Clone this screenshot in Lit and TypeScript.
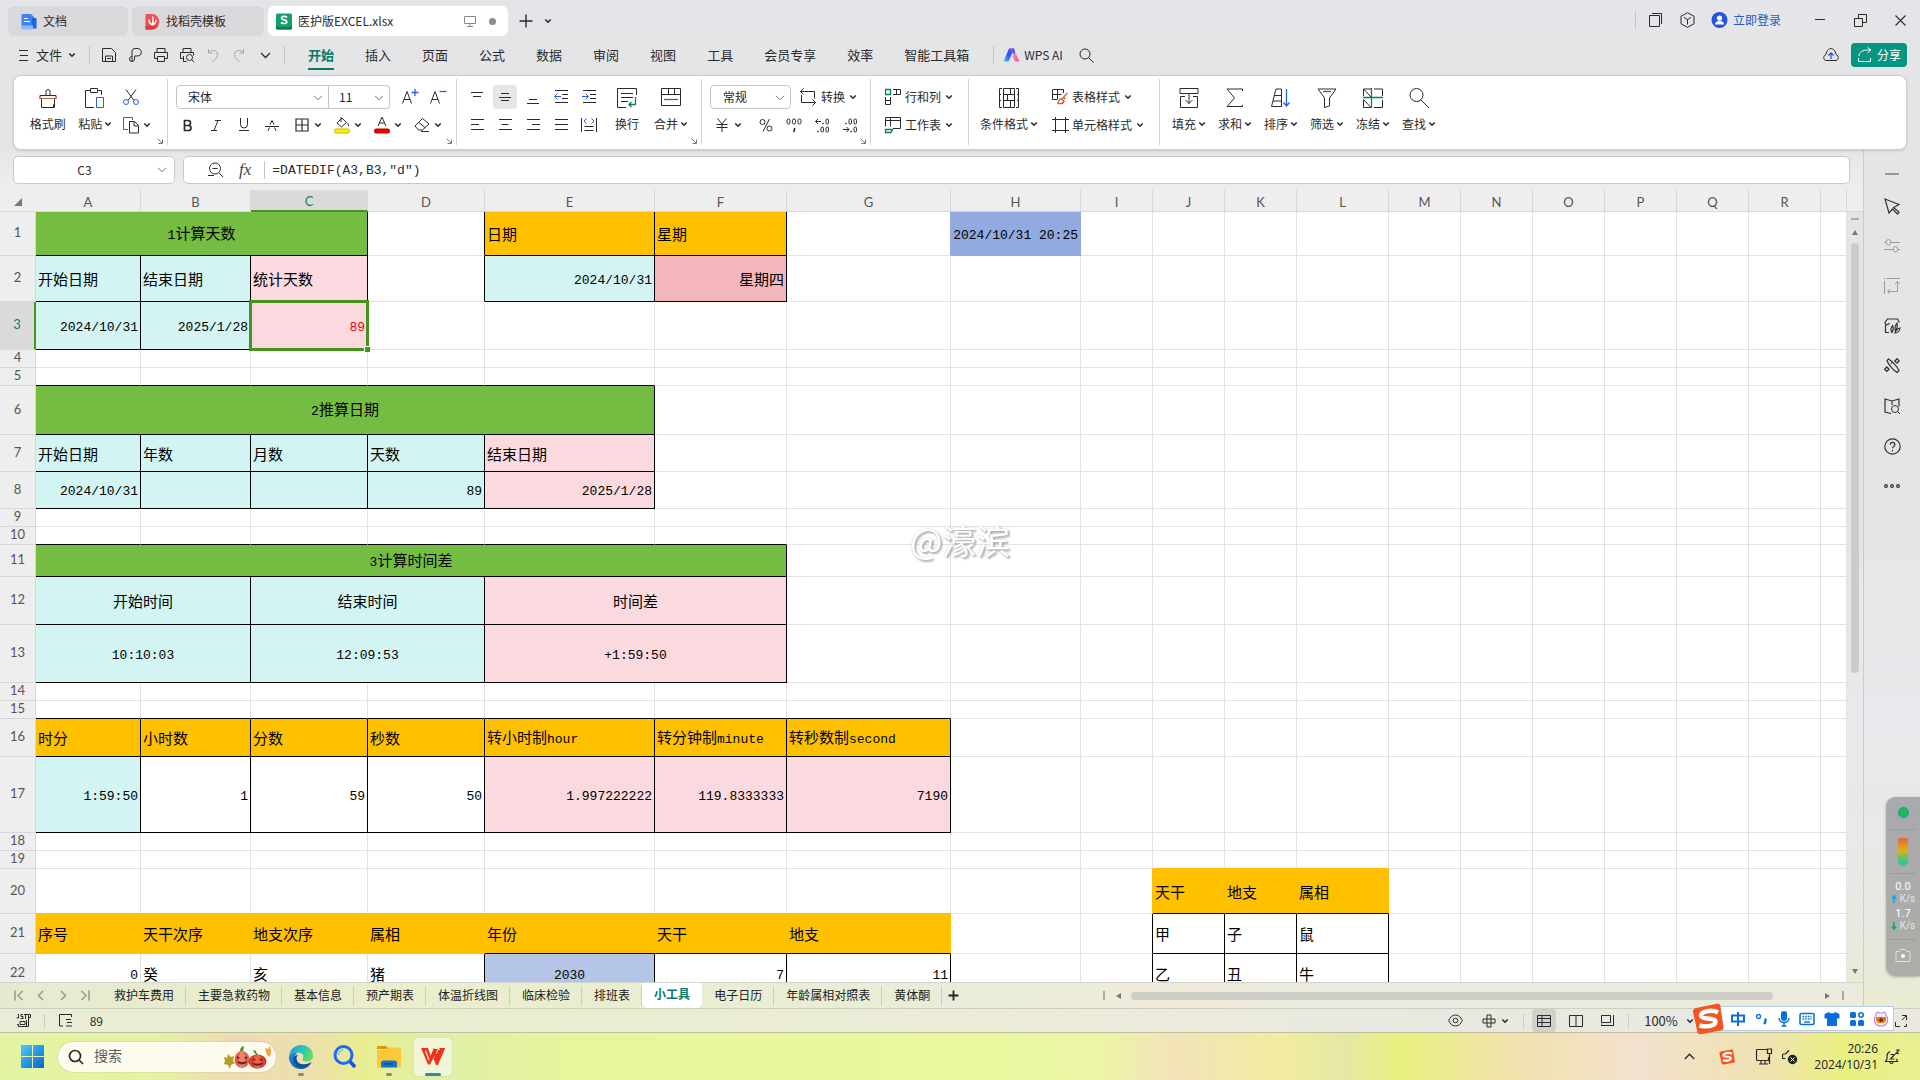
import { LitElement, html, css, svg, nothing, SVGTemplateResult } from "lit";
import { customElement } from "lit/decorators.js";
import { classMap } from "lit/directives/class-map.js";

const G = "#0a8060";
const B = "#2b5fe0";
const icon = (w: number, h: number, body: SVGTemplateResult) => html`<svg
  width=${w} height=${h} viewBox="0 0 ${w} ${h}" fill="none" stroke="currentColor" aria-hidden="true">${body}</svg>`;

const caret = icon(8, 6, svg`<path d="M1.3 1.5 4 4.2 6.7 1.5" stroke-width="1.6"/>`);
const chevron = icon(10, 6, svg`<path d="M1 .8 5 4.8 9 .8" stroke="#777"/>`);
const corner = icon(6, 6, svg`<path d="M.5.5 5 5M5.5 1.5v4h-4" stroke="#777"/>`);

const I = {
  menu: icon(12, 13, svg`<path d="M1 1.5h9M2 6.5h8M1 11.5h9"/>`),
  save: icon(16, 16, svg`<path d="M1.5 1.5h9l4 4v9h-13zM4.5 14v-5h7v5M6 11.5h4"/>`),
  link: icon(16, 16, svg`<path d="M5 14.5V4a3 3 0 0 1 3-2.5h2a4 3.5 0 0 1 0 7.5H7.5V12a2.5 2.5 0 0 1-5 0c0-1.5 1-2.5 2.5-2.5"/>`),
  print: icon(16, 16, svg`<path d="M4 5V1.5h8V5M4 11.5H1.5V5.5h13v6H12M4.5 9.5h7v5h-7z"/>`),
  preview: icon(16, 16, svg`<path d="M4 5V1.5h8V5M4 11.5H1.5V5.5h13v3M4.5 9v5.5h3"/><circle cx="10.5" cy="10.5" r="3"/><path d="m12.700 12.7 2.5 2.5"/>`),
  undo: icon(12, 16, svg`<path d="M1.5 2v4h4M1.5 6C4 2 10.5 3 10.5 7.5c0 3-2 5-5 7" stroke="#a4a4a8"/>`),
  redo: icon(12, 16, svg`<path d="M10.5 2v4h-4M10.5 6C8 2 1.5 3 1.5 7.5c0 3 2 5 5 7" stroke="#a4a4a8"/>`),
  more: icon(11, 7, svg`<path d="m1 1 4.5 4.5L10 1" stroke-width="1.3"/>`),
  search: icon(17, 17, svg`<circle cx="7" cy="7" r="5"/><path d="m10.7 10.7 5 5"/>`),
  ai: icon(17, 14, svg`<defs><linearGradient id="ai1" x1="0" y1="1" x2="1" y2="0"><stop stop-color="#39d0f5"/><stop offset=".5" stop-color="#2756f2"/><stop offset="1" stop-color="#5a4df0"/></linearGradient><linearGradient id="ai2" x1="0" y1="0" x2="1" y2="1"><stop stop-color="#e9a0f6"/><stop offset="1" stop-color="#ff4f8b"/></linearGradient></defs><path d="M6 .5h5L5.5 13.5h-5z" fill="url(#ai1)" stroke="none"/><path d="M8.500 .5H11l1 4-1 2-2-1zM10.500 6H13l3.500 7.500H12L9.500 8.500z" fill="url(#ai2)" stroke="none"/><path d="M8.500.5H11l1.500 5H10z" fill="#5a4df0" stroke="none"/>`),
  cloud: icon(18, 16, svg`<path d="M4 13.5c-3-.5-3-5 0-6C4.5 3.5 7 1.5 9 1.5s4.5 2 5 6c3 1 3 5.500 0 6z"/><path d="M9 12V6M6.5 8.5 9 6l2.5 2.5" stroke=${B} stroke-width="1.3"/>`),
  share: icon(16, 16, svg`<path d="M2 9c0-4 4-6 9-6h3M10.5.5 14 3l-3.5 3M1.5 11v3.500h12V11" stroke="#fff"/>`),
  brush: icon(20, 22, svg`<path d="M8 8V4.500a2 2 0 0 1 4 0V8M2 12V8.500h16V12"/><path d="M2 11.5h16" stroke="#d1652e"/><path d="M3.500 12v8.500h12v-3M16.500 12v8.500h-2"/>`),
  paste: icon(22, 22, svg`<path d="M6 3.500H1.500v17H10M6.500 1.500h7v4h-7zM14 3.500h3.500V8"/><path d="M12.500 10.500h7v10h-7z" stroke=${B}/>`),
  cut: icon(18, 18, svg`<path d="m4 1.500 8 11M14 1.500l-8 11"/><circle cx="4" cy="14" r="2.500" stroke=${B}/><circle cx="14" cy="14" r="2.500" stroke=${B}/>`),
  copy: icon(18, 18, svg`<path d="M6 13.500H1.500v-12h9V4" stroke=${B}/><path d="M7.500 5.500h5l4 4v7.500h-9zM12 5.500v4.500h4.500"/>`),
  aup: icon(18, 18, svg`<path d="M1.500 15.500 6 3.500l4.500 12M3 11.500h6"/><path d="M14 1v7M10.500 4.500h7" stroke=${B} stroke-width="1.300"/>`),
  adown: icon(18, 18, svg`<path d="M1.500 15.500 6 3.500l4.500 12M3 11.500h6"/><path d="M10.500 3.500h7" stroke=${B} stroke-width="1.300"/>`),
  bold: icon(12, 13, svg`<path d="M2.500 1.500H6a2.500 2.500 0 0 1 0 5H2.500zM2.500 6.500h4a2.500 2.500 0 0 1 0 5h-4z" stroke-width="1.700"/>`),
  italic: icon(12, 13, svg`<path d="M5 1.500h6M1 11.500h6M8 1.500l-4 10"/>`),
  underline: icon(12, 14, svg`<path d="M2.500 0v6.500a3.500 3.500 0 0 0 7 0V0M1 12.500h10"/>`),
  strike: icon(14, 13, svg`<path d="m3 12 1.500-3.500M11 12 9.500 8.500M5 5.500l2-4 2 4M0 7.500h14"/>`),
  borders: icon(14, 14, svg`<path d="M1 1h12v12H1zM7 1v12M1 7h12" stroke-width="1.200"/>`),
  fill: icon(16, 18, svg`<path d="M4.500 5.500 8 2l4.500 4.500-5 4.500L3 7zM7 1v5M13.500 7c1.500 2 1.500 3 .500 3.500"/><rect x=".5" y="13" width="15" height="4" rx="1.500" fill="#ffef00" stroke="#c9bc00"/>`),
  color: icon(16, 18, svg`<path d="M4 10 8 1l4 9M5.500 7h5"/><rect x=".5" y="13" width="15" height="4" rx="1.500" fill="#f00000" stroke="#b50000"/>`),
  eraser: icon(18, 16, svg`<path d="M2 9 9.500 1.500 16 7l-6.500 6H5.500zM6 5.500l6 5M8 14.500h8"/>`),
  vtop: icon(14, 14, svg`<path d="M1 2.500h12M3 6.500h8"/>`),
  vmid: icon(14, 14, svg`<path d="M3 3.500h8M1 7.500h12M3 10.500h8"/>`),
  vbot: icon(14, 14, svg`<path d="M3 9.500h8M1 13.500h12"/>`),
  outd: icon(14, 14, svg`<path d="M1 .5h13M8 4.500h6M8 8.500h6M1 12.500h13"/><path d="M7 6.500H1M3.500 3.500l-3 3 3 3" stroke=${B}/>`),
  ind: icon(14, 14, svg`<path d="M1 .5h13M8 4.500h6M8 8.500h6M1 12.500h13"/><path d="M0 6.500h6M3.500 3.500l3 3-3 3" stroke=${B}/>`),
  left: icon(14, 14, svg`<path d="M1 1.500h13M1 6.500h8M1 11.500h13"/>`),
  center: icon(14, 14, svg`<path d="M1 1.500h13M3.500 6.500h7M1 11.500h13"/>`),
  right: icon(14, 14, svg`<path d="M1 1.500h13M6 6.500h8M1 11.500h13"/>`),
  just: icon(14, 14, svg`<path d="M1 1.500h13M1 6.500h13M1 11.500h13"/>`),
  dist: icon(16, 16, svg`<path d="M.5 1v14M15.500 1v14M3.500 9.500h9M3.500 13.500h9"/><path d="m5.500 1.500-2.500 2.500 2.500 2.500M10.500 1.500 13 4l-2.500 2.500" stroke=${B}/>`),
  wrap: icon(22, 22, svg`<path d="M10 20.500H1.500v-19h19V8M5 6.500h12M5 10.500h12M5 14.500h7"/><path d="M19.500 10v7.500H13M15.500 15 13 17.500l2.500 2.500" stroke=${G} stroke-width="1.300"/>`),
  merge: icon(22, 22, svg`<path d="M1.500 1.500h19v17h-19zM1.500 7.500h19M8.500 1.500v6M14.500 1.500v6"/><path d="M4 12.500h14" stroke=${G} stroke-width="1.300"/>`),
  convert: icon(18, 18, svg`<path d="M3.500.5.5 3.500h14v7M1.500 7v7.500h14M3.500 6.500.5 3.500M12.500 11.500l3 3-3 3"/>`),
  yen: icon(14, 14, svg`<path d="M2.500.5 7 6l4.500-5.500M1.500 6.500h11M1.500 9.500h11M7 6v8"/>`),
  percent: icon(14, 14, svg`<circle cx="3.500" cy="4" r="2.500"/><circle cx="10.500" cy="10.500" r="2.500"/><path d="M10.500 1 4 13.500"/>`),
  thousand: icon(16, 16, svg`<rect x="1" y="2" width="3" height="5" rx="1.500"/><rect x="6.500" y="2" width="3" height="5" rx="1.500"/><rect x="12" y="2" width="3" height="5" rx="1.500"/><path d="M8.500 11v2l-1 2" stroke-width="1.600"/>`),
  incdec: icon(16, 16, svg`<path d="M7 4.500H1.500M4 2 1.500 4.500 4 7"/><circle cx="9" cy="6.500" r=".5"/><rect x="12" y="2" width="2.500" height="5" rx="1.200"/><circle cx="4" cy="14.500" r=".5"/><rect x="7" y="10" width="2.500" height="5" rx="1.200"/><rect x="12" y="10" width="2.500" height="5" rx="1.200"/>`),
  decdec: icon(16, 16, svg`<circle cx="4" cy="6.500" r=".5"/><rect x="7" y="2" width="2.500" height="5" rx="1.200"/><rect x="12" y="2" width="2.500" height="5" rx="1.200"/><path d="M1 12.500h6M4.500 10 7 12.500 4.500 15"/><circle cx="9" cy="14.500" r=".5"/><rect x="12" y="10" width="2.500" height="5" rx="1.200"/>`),
  rowcol: icon(16, 18, svg`<path d="M.5 1.500h5v5h-5z" stroke=${G} stroke-width="1.400"/><path d="M8 1.500h7.500v5H8M11.500 1.500v5M.5 9v7.500h5V9M.5 12.500h5"/>`),
  sheet: icon(18, 18, svg`<path d="M9 12.500h7.500v-11h-15v9M1.500 4.500h15M6.500 1.500v9"/><path d="M1.500 13.500h7l-1.500 3h-5.500z" stroke=${G} stroke-width="1.300"/>`),
  cond: icon(22, 22, svg`<path d="M4 1.500H1.500v19H4M18 1.500h2.500v19H18M5.500 1.500h11v19h-11zM5.500 7.500h11M5.500 13.500h11M12.500 1.500v6M9.500 7.500v6M12.500 13.500v7M1.500 7.500H3M1.500 13.500H3M19 7.500h1.500M19 13.500h1.500"/>`),
  tstyle: icon(18, 18, svg`<path d="M6 11.500H1.500v-10h11V5M1.500 6.500h9M6.500 1.500v10"/><path d="m16.500 5-6 6.500M12 9l2.500 2M10 11c-2 0-2.500 1.500-3 4.500 3 .500 5.500 0 6-2.500z" stroke="#d1652e" stroke-width="1.300"/>`),
  cstyle: icon(18, 18, svg`<path d="M4.500 1v16M14.500 1v16M1 3.500h17M1 14.500h17"/>`),
  fillc: icon(22, 22, svg`<path d="M2 1.500h18v5H2zM7 9.500H2.500v11h17v-11H15M11 6.500v10M7.500 13l3.500 3.500 3.500-3.500"/>`),
  sum: icon(22, 22, svg`<path d="M18.500 4V2H3l7.500 9L3 19.500h15.500V18"/>`),
  sort: icon(22, 22, svg`<path d="M1.500 19.500 6 2h5.500v17.500zM4.500 8.500h7M3 14h8.500"/><path d="M16.500 2v17M13.500 15.500l3 3.500 3-3.500" stroke=${B} stroke-width="1.300"/>`),
  filter: icon(22, 22, svg`<path d="M2 2h18l-6.500 9v8l-5 1.500V11z"/><path d="M7 4.500h8" stroke=${G} stroke-width="1.300"/>`),
  freeze: icon(22, 22, svg`<path d="M1.500 9V2H9M12 2h8.500v7M20.500 13v7.500H12M1.500 13v7.500H9M1.500 2 9 10M1.500 12.500 9 20.500"/><path d="M9.500 1v20M1 10.500h20" stroke=${G} stroke-width="1.300"/>`),
  find: icon(22, 22, svg`<circle cx="8.500" cy="8" r="6.500"/><path d="m13 13 8 8"/>`),
  zoomout: icon(18, 18, svg`<circle cx="9" cy="7.500" r="5.500"/><path d="M6.500 7.500h5M13 12l4 4M2 14.500h6"/>`),
};

type Cell = { t?: string; f?: string; a?: string; s?: number; r?: string; b?: string; red?: boolean; sel?: boolean };
const LETTERS = "ABCDEFGHIJKLMNOPQR".split("").concat("");
const WIDTHS = [105, 110, 117, 117, 170, 132, 164, 130, 72, 72, 72, 92, 72, 72, 72, 72, 72, 72, 0];
const HEIGHTS = [44, 46, 48, 18, 18, 49, 37, 37, 18, 18, 32, 48, 58, 18, 18, 38, 76, 18, 18, 45, 40, 40];

const box = (t: string, f: string, a = "l", s = 1): Cell => ({ t, f, a, s, r: "k", b: "k" });
const under = (cols: string, b = "k"): Record<string, Cell> => Object.fromEntries(cols.split("").map((c) => [c, { b }]));
const flat = (t: string, b = "o"): Cell => ({ t, f: "orange", r: "o", b });

const ROWS: Record<number, Record<string, Cell>> = {
  1: { A: box("1计算天数", "green", "c", 3), D: { r: "k" }, E: box("日期", "orange"), F: box("星期", "orange"), G: { r: "u" }, H: { t: "2024/10/31 20:25", f: "blue", a: "r", r: "u", b: "u" } },
  2: { A: box("开始日期", "cyan"), B: box("结束日期", "cyan"), C: box("统计天数", "pink"), D: { r: "k" }, E: box("2024/10/31", "cyan", "r"), F: box("星期四", "rose", "r") },
  3: { A: box("2024/10/31", "cyan", "r"), B: box("2025/1/28", "cyan", "r"), C: { ...box("89", "pink", "r"), red: true, sel: true } },
  5: under("ABCDE"),
  6: { A: box("2推算日期", "green", "c", 5) },
  7: { A: box("开始日期", "cyan"), B: box("年数", "cyan"), C: box("月数", "cyan"), D: box("天数", "cyan"), E: box("结束日期", "pink") },
  8: { A: box("2024/10/31", "cyan", "r"), B: box("", "cyan"), C: box("", "cyan"), D: box("89", "cyan", "r"), E: box("2025/1/28", "pink", "r") },
  10: under("ABCDEF"),
  11: { A: box("3计算时间差", "green", "c", 6) },
  12: { A: box("开始时间", "cyan", "c", 2), C: box("结束时间", "cyan", "c", 2), E: box("时间差", "pink", "c", 2) },
  13: { A: box("10:10:03", "cyan", "c", 2), C: box("12:09:53", "cyan", "c", 2), E: box("+1:59:50", "pink", "c", 2) },
  15: under("ABCDEFG"),
  16: { A: box("时分", "orange"), B: box("小时数", "orange"), C: box("分数", "orange"), D: box("秒数", "orange"), E: box("转小时制hour", "orange"), F: box("转分钟制minute", "orange"), G: box("转秒数制second", "orange") },
  17: { A: box("1:59:50", "cyan", "r"), B: box("1", "", "r"), C: box("59", "", "r"), D: box("50", "", "r"), E: box("1.997222222", "pink", "r"), F: box("119.8333333", "pink", "r"), G: box("7190", "pink", "r") },
  19: { ...under("JKL", "o") },
  20: { ...under("ABCDEFG", "o"), I: { r: "o" }, J: flat("天干", "k"), K: flat("地支", "k"), L: flat("属相", "k") },
  21: { A: flat("序号"), B: flat("天干次序"), C: flat("地支次序"), D: flat("属相"), E: flat("年份", "k"), F: flat("天干", "k"), G: flat("地支", "k"), I: { r: "k" }, J: box("甲", ""), K: box("子", ""), L: box("鼠", "") },
  22: { A: { t: "0", a: "r" }, B: { t: "癸" }, C: { t: "亥" }, D: { t: "猪", r: "k" }, E: box("2030", "peri", "c"), F: box("7", "", "r"), G: box("11", "", "r"), I: { r: "k" }, J: box("乙", ""), K: box("丑", ""), L: box("牛", "") },
};

@customElement("sheet-grid")
export class SheetGrid extends LitElement {
  static styles = css`
    :host { display: block; flex: 1; min-width: 0; overflow: hidden; background: #fff; }
    table { width: 100%; table-layout: fixed; border-collapse: separate; border-spacing: 0; }
    .rowhead { width: 36px; }
    th { box-sizing: border-box; padding: 0; background: #eeeeee; color: #555; font: 400 13px/15px Lato, "Open Sans", sans-serif; border: 0 solid #d8d8d8; border-width: 0 1px 1px 0; }
    thead th { height: 22px; line-height: 18px; padding-top: 2px; }
    tbody th { padding-bottom: 2px; }
    .corner { border-right-color: #eee; }
    .corner svg { display: block; margin: 0 13px 0 auto; }
    th.on { background: #dadada; color: #0c7f63; }
    thead th.on { border-bottom: 2px solid #43931d; }
    tbody th.on { border-right: 2px solid #43931d; }
    td { position: relative; box-sizing: border-box; padding: 1px 2px 0; border: 0 solid #e2e2e2; border-width: 0 1px 1px 0; white-space: nowrap; color: #000; font: 400 15px/16px "Noto Sans CJK SC", sans-serif; }
    td.h { padding: 0; }
    .lat { font: 13px/16px "Liberation Mono", monospace; }
    .c { text-align: center; }
    .r { text-align: right; }
    .red { color: #f00; }
    .green { background: #75bd42; } .orange { background: #ffc000; } .cyan { background: #d2f4f2; }
    .pink { background: #fadade; } .rose { background: #f4b6bd; } .blue { background: #91aae0; } .peri { background: #b4c5e8; }
    .rk { border-right-color: #000; } .bk { border-bottom-color: #000; }
    .ro { border-right-color: #ffc000; } .bo { border-bottom-color: #ffc000; }
    .ru { border-right-color: #91aae0; } .bu { border-bottom-color: #91aae0; }
    .frame { position: absolute; inset: -2px; z-index: 1; border: 3px solid #43931d; }
    .frame::after { content: ""; position: absolute; right: -4px; bottom: -4px; width: 5px; height: 5px; background: #43931d; border: 1px solid #fff; border-width: 1px 0 0 1px; }
  `;

  private text(t = "") {
    return t.split(/([\x20-\x7e]+)/).filter(Boolean).map((p) => (/[\x20-\x7e]/.test(p) ? html`<span class="lat">${p}</span>` : p));
  }

  private cells(row: number) {
    const spec = ROWS[row] ?? {};
    const out = [];
    for (let i = 0; i < LETTERS.length; ) {
      const c: Cell = spec[LETTERS[i]] ?? {};
      const cls = { h: !c.t, [c.f || "plain"]: true, [c.a || "l"]: true, ["r" + (c.r || "g")]: true, ["b" + (c.b || "g")]: true, red: !!c.red };
      out.push(html`<td class=${classMap(cls)} colspan=${c.s ?? 1}>${this.text(c.t)}${c.sel ? html`<div class="frame"></div>` : nothing}</td>`);
      i += c.s ?? 1;
    }
    return out;
  }

  render() {
    return html`<table>
      <colgroup><col class="rowhead" />${WIDTHS.map((w) => html`<col style=${w ? `width:${w}px` : ""} />`)}</colgroup>
      <thead><tr>
        <th class="corner">${icon(8, 8, svg`<path d="M8 0v8H0z" fill="#777" stroke="none"/>`)}</th>
        ${LETTERS.map((l) => html`<th class=${l === "C" ? "on" : ""} scope="col">${l}</th>`)}
      </tr></thead>
      <tbody>${HEIGHTS.map((h, i) => html`<tr style="height:${h}px">
        <th class=${i === 2 ? "on" : ""} scope="row">${i + 1}</th>${this.cells(i + 1)}</tr>`)}</tbody>
    </table>`;
  }
}

const SOGOU = (s: number) => html`<svg width=${s} height=${s} viewBox="0 0 32 32" aria-hidden="true"><path d="M4 5 25 .8c2-.3 3 .5 3.300 2L31.500 24c.3 2-.5 3-2 3.300L9 31.200c-2 .3-3-.5-3.500-2L1 9C.6 7 2 5.500 4 5z" fill="#f4541f"/><path d="M26 9.500C20 6 8 8.500 9 13c1 4 14.500 1 14.500 5.500 0 4.500-8 6-16 4" fill="none" stroke="#fff" stroke-width="4.400"/></svg>`;

const MENUS = ["开始", "插入", "页面", "公式", "数据", "审阅", "视图", "工具", "会员专享", "效率", "智能工具箱"];
const SHEETS = ["救护车费用", "主要急救药物", "基本信息", "预产期表", "体温折线图", "临床检验", "排班表", "小工具", "电子日历", "年龄属相对照表", "黄体酮"];

@customElement("app-root")
export class AppRoot extends LitElement {
  static styles = css`
    :host { position: relative; display: flex; flex-direction: column; height: 100vh; overflow: hidden; color: #2b2b2b;
      font: 12px/16px "Noto Sans CJK SC", sans-serif; background: linear-gradient(180deg, #e4e5e8 0, #e5e4e5 45%, #e9e8ec 68%, #e8e9e2 86%, #e9ecd2 93%, #e9ecd6 100%); }
    * { box-sizing: border-box; }
    svg { display: block; flex: none; }
    button, select, input { font: inherit; color: inherit; background: none; border: 0; padding: 0; margin: 0; outline: 0; }
    button { display: flex; align-items: center; justify-content: center; white-space: nowrap; }
    a { color: inherit; text-decoration: none; }
    .grow { flex: 1; }
    .sep { width: 1px; height: 18px; background: #c4c4c6; flex: none; }

    .title { display: flex; padding: 6px 0 2px 8px; gap: 4px; height: 38px; }
    .doc { display: flex; align-items: center; justify-content: flex-start; height: 30px; width: 120px; padding: 0 13px; gap: 6px; border-radius: 6px; background: #d9d8da; }
    .doc.b { width: 132px; }
    .doc.c { width: 240px; background: #fff; padding: 0 8px; }
    .doc .grow { text-align: left; }
    .doc.c .dot { width: 7px; height: 7px; border-radius: 50%; background: #8c8c8c; margin: 0 4px 0 7px; }
    .plus { width: 28px; }
    .win { display: flex; align-items: center; height: 28px; }
    .win button { width: 40px; height: 28px; }
    .win .slim { width: 32px; }
    .login { display: flex; align-items: center; gap: 5px; color: #1c5ec8; margin: 0 19px 0 7px; }

    .menubar { display: flex; align-items: center; height: 37px; padding: 0 13px 3px 18px; }
    .menubar .file { gap: 6px; font-size: 13px; margin-right: 13px; }
    .tool { width: 26px; height: 26px; }
    .tabs { display: flex; gap: 31px; margin: 0 24px 0 23px; }
    .tabs button { position: relative; height: 32px; font-size: 13px; }
    .tabs .on { color: #067a68; font-weight: 700; }
    .tabs .on::after { content: ""; position: absolute; left: 0; right: 0; bottom: 1px; height: 2px; background: #067a68; }
    .ai { gap: 4px; margin: 0 15px 0 9px; }
    .share { height: 24px; width: 56px; border-radius: 4px; background: #06957f; color: #fff; gap: 4px; margin-left: 11px; }

    .ribbon { display: flex; align-items: flex-start; height: 75px; margin: 0 13px; padding-top: 3px; background: #fff; border: 1px solid #cfcfd1; border-radius: 8px; box-shadow: 0 1px 3px #0002; position: relative; z-index: 1; flex: none; }
    .group { display: flex; position: relative; height: 66px; padding: 6px 6px 0; border-right: 1px solid #d4d4d6; }
    .group.last { border: 0; }
    .g1 { width: 154px; padding-left: 10px; } .g2 { width: 289px; } .g3 { width: 245px; } .g4 { width: 169px; padding-left: 8px; }
    .g5 { width: 98px; padding-left: 12px; } .g6 { width: 191px; padding-left: 9px; }
    .launch { position: absolute; right: 4px; bottom: 1px; }
    .big { flex-direction: column; justify-content: flex-start; gap: 6px; padding-top: 1px; height: 50px; width: 46px; }
    .big.w48 { width: 48px; } .big.w40 { width: 40px; } .big.w62 { width: 62px; }
    .big i { display: flex; align-items: center; justify-content: center; height: 24px; }
    .big span { display: flex; align-items: center; gap: 2px; }
    .stack { display: flex; flex-direction: column; gap: 4px; }
    .line { display: flex; height: 24px; align-items: center; }
    .sm { width: 28px; height: 24px; border-radius: 4px; }
    .sm.on { background: #e6e6e6; width: 24px; margin: 0 2px; }
    .dd { width: 40px; height: 24px; justify-content: flex-start; }
    .dd i { display: flex; justify-content: center; width: 20px; margin-right: 2px; }
    .wide { height: 24px; justify-content: flex-start; gap: 2px; }
    .wide i { display: flex; justify-content: center; width: 20px; }
    .wide span { display: flex; align-items: center; gap: 4px; }
    .pick { position: relative; display: flex; height: 24px; border: 1px solid #c6c6c8; border-radius: 4px; background: #fff; color: #1c1f33; }
    .pick select { appearance: none; width: 79px; padding: 0 12px; }
    .pick svg { position: absolute; right: 5px; top: 9px; pointer-events: none; }
    .pick.font { border-radius: 4px 0 0 4px; } .pick.font select { width: 151px; padding: 0 11px; }
    .pick.size { border-left: 0; border-radius: 0 4px 4px 0; margin-right: 6px; } .pick.size select { width: 60px; padding: 0 10px; }
    .in2 { margin-left: 2px; } .in4 { margin-left: 4px; } .in6 { margin-left: 6px; } .in8 { margin-left: 8px; } .in10 { margin-left: 10px; } .in12 { margin-left: 12px; } .in14 { margin-left: 14px; }

    .body { display: flex; flex: 1; min-height: 0; }
    .main { display: flex; flex-direction: column; flex: 1; min-width: 0; }
    .fbar { display: flex; gap: 8px; padding: 6px 13px; background: linear-gradient(#e6e6e7, #eee); }
    .name, .formula { display: flex; align-items: center; height: 28px; background: #fff; border: 1px solid #c9c9cb; border-radius: 5px; }
    .name { width: 162px; padding-right: 7px; }
    .name input { flex: 1; min-width: 0; text-align: center; padding-right: 2px; }
    .formula { flex: 1; padding-left: 22px; }
    .formula input { flex: 1; font: 13px "Liberation Mono", monospace; margin-left: 7px; }
    .fx { font: italic 17px "Liberation Serif", serif; margin: 0 13px 0 15px; color: #444; }
    .sheet { display: flex; flex: 1; min-height: 0; background: linear-gradient(#eeeeee 22px, #0000 22px); }
    .vbar { display: flex; flex-direction: column; align-items: center; width: 16px; margin-top: 21px; border-top: 1px solid #d8d8d8; padding: 6px 0 8px; gap: 10px; }
    .vbar .tick { width: 8px; height: 2px; background: #b0b0b0; }
    .vtrack { flex: 1; width: 8px; margin-top: -2px; }
    .vthumb { height: 60%; border-radius: 4px; background: #cbcbcc; }
    .up, .down { width: 0; height: 0; border: 3px solid #0000; border-top: 0; border-bottom: 5px solid #777; }
    .down { border-bottom: 0; border-top: 5px solid #777; }

    .sheets { display: flex; align-items: center; height: 26px; border-top: 1px solid #d3d4cd; background: linear-gradient(90deg, #e6ead0, #eaeecb 20%, #e9edd8 50%, #efebdb 62%, #eaeae0 75%, #eaebdc); }
    .nav { width: 22px; height: 22px; color: #9b9d90; }
    .nav.first { margin-left: 8px; }
    .nav.end { margin-right: 6px; }
    .st { height: 20px; padding: 0 11px 2px 12px; border-right: 1px solid #cdd0b8; color: #222; }
    .st.on { height: 25px; padding: 0 12px 3px; background: #fff; border: 0; border-radius: 0 0 6px 6px; color: #06796a; font-weight: 700; align-self: flex-start; }
    .hbar { display: flex; align-items: center; width: 741px; gap: 11px; margin-right: 19px; }
    .htrack { flex: 1; margin-left: -2px; }
    .hthumb { width: 94%; height: 8px; border-radius: 4px; background: #cdcec6; }
    .tickv { width: 2px; height: 9px; background: #aaaba2; }
    .add { width: 22px; }

    .side { display: flex; flex-direction: column; align-items: center; width: 57px; border-left: 1px solid #cbcbcc; padding-top: 12px; }
    .side button { height: 40px; width: 40px; color: #333; }
    .side .off { color: #9c9c9e; }
    .side .dash { height: 24px; }
    .side .dash i { width: 14px; height: 2px; background: #999; }

    .status { display: flex; align-items: center; height: 24px; border-top: 1px solid #cbcdbd; background: linear-gradient(90deg, #e9edd6, #eaedcf 30%, #edebdb 58%, #e8e8e2 75%, #ebe8e0); padding-left: 16px; flex: none; }
    .status .sep { height: 14px; background: #cbcdbd; }
    .vw { width: 32px; height: 23px; }
    .vw.on i { display: flex; justify-content: center; align-items: center; width: 24px; height: 23px; border-radius: 4px; background: #d2d1c9; }
    .zoomv { width: 64px; gap: 8px; font-size: 13px; padding-left: 16px; }
    .full { margin: 0 13px 0 202px; }

    .task { display: flex; align-items: center; height: 48px; flex: none; border-top: 1px solid #bcbf9c; padding-left: 21px;
      background: linear-gradient(90deg, #e3f4a4 0, #e6f2a4 8%, #efdcb2 12%, #ecdfae 16%, #e9ee90 19%, #dfefa8 23%, #e8f59c 30%, #e9f79f 52%, #ecf5a6 57%, #f3e4b9 61%, #f2eca0 67%, #e4e8a6 70%, #e9f07f 73%, #efe3a8 78%, #f3e1cf 85%, #efe2b0 92%, #e9f080 96%, #e8ef92 100%); }
    .searchbox { display: flex; align-items: center; width: 218px; height: 30px; margin: 0 6px 0 14px; padding: 0 3px 0 10px; gap: 10px; border-radius: 15px; background: #fdfaee; box-shadow: 0 0 2px #0003; }
    .searchbox input { flex: 1; min-width: 0; font-size: 14px; padding-bottom: 3px; }
    .searchbox input::placeholder { color: #5c5c5c; opacity: 1; }
    .app { position: relative; width: 38px; height: 38px; margin-right: 6px; border-radius: 4px; }
    .app.on { background: #f0f6d6; box-shadow: 0 0 1px #0004; }
    .app.run::after, .app.on::after { content: ""; position: absolute; bottom: 0; left: 50%; width: 6px; height: 3px; margin-left: -3px; border-radius: 2px; background: #8a8a66; }
    .app.on::after { width: 16px; margin-left: -8px; background: #2a8fa0; }
    .clock { text-align: right; font: 12px/16px "Open Sans", sans-serif; color: #222; margin: 0 6px 0 16px; }
    .tray { display: flex; align-items: center; padding-right: 20px; }
    .tray button { height: 32px; }
    .tray .t24 { margin-right: 24px; } .tray .t20 { margin-left: 20px; margin-right: 9px; }

    .ime { position: absolute; right: 26px; bottom: 49px; display: flex; align-items: center; height: 25px; width: 202px; color: #0a6fdc; }
    .ime .bg { display: flex; align-items: center; justify-content: space-between; flex: 1; height: 25px; margin-left: -10px; padding: 0 4px 0 15px; background: #fff; border: 1px solid #b9cbe0; }
    .ime > svg { position: relative; z-index: 1; }
    .float { position: absolute; right: 0; bottom: 104px; width: 34px; height: 179px; display: flex; flex-direction: column; align-items: center; border-radius: 9px 0 0 9px; background: linear-gradient(#a9a9ae, #adaea7); color: #fff; font: 11px/13px Roboto, sans-serif; padding-top: 10px; box-shadow: 0 1px 3px #0004; }
    .float .led { width: 11px; height: 11px; border-radius: 50%; background: #0bbf63; border: 1px solid #348fa0; }
    .float hr { width: 26px; height: 1px; border: 0; margin: 11px 0 8px; background: #9c9ca0; flex: none; }
    .float .temp { width: 10px; height: 28px; border-radius: 2px 2px 5px 5px; background: linear-gradient(#e8642f, #e0b020 45%, #4fc86a 75%, #38b8c8); }
    .float hr.n { margin: 7px 0 6px; }
    .rate { display: flex; flex-direction: column; align-items: center; padding-bottom: 2px; }
    .rate small { display: flex; gap: 3px; font-size: 10px; line-height: 12px; color: #e4e4e4; }
    .float hr.m { margin: 5px 0 8px; }
    .mark { position: absolute; left: 50%; top: 50%; transform: translate(-50%, -50%); font: 34px/40px "Noto Sans CJK SC", sans-serif; color: #fff; text-shadow: 2px 2px 2px #aaa, 0 0 2px #ccc; pointer-events: none; }
  `;

  private big(ic: unknown, label: string, dd = true, w = "") {
    return html`<button class="big ${w}"><i>${ic}</i><span>${label}${dd ? caret : nothing}</span></button>`;
  }
  private sm(ic: unknown, label: string, cls = "") {
    return html`<button class="sm ${cls}" aria-label=${label}>${ic}</button>`;
  }
  private dd(ic: unknown, label: string, cls = "") {
    return html`<button class="dd ${cls}" aria-label=${label}><i>${ic}</i>${caret}</button>`;
  }
  private wide(ic: unknown, label: string, cls = "") {
    return html`<button class="wide ${cls}"><i>${ic}</i><span>${label}${caret}</span></button>`;
  }
  private launch(label: string) {
    return html`<button class="launch" aria-label=${label}>${corner}</button>`;
  }

  private title() {
    return html`<header class="title">
      <button class="doc">${icon(16, 17, svg`<path d="M1.500 1H10l3 3v11H1.500a1 1 0 0 1-1-1V2a1 1 0 0 1 1-1z" fill="#3f82f8" stroke="none"/><path d="M11 5h3.500a1 1 0 0 1 1 1v9.500h-5z" fill="#1e62e0" stroke="none"/><path d="M.5 12.500h11.500v4h-11a.5.5 0 0 1-.5-.5z" fill="#8fb8fb" stroke="none"/><path d="M3 5.500h4M3 8.500h6" stroke="#fff"/>`)}<span>文档</span></button>
      <button class="doc b">${icon(15, 17, svg`<path d="M.5 1H7a7 7.500 0 0 1 0 15.500H.5z" fill="#f05050" stroke="none"/><path d="M.5 13h12.300a7 6 0 0 1-5.800 3.500H.5z" fill="#d83c3c" stroke="none"/><path d="M7.500 3.500c1 2.500 1 5 0 8.500M4 6.500c0 3 1 4.500 3.500 5.500M11 6.500c0 3-1 4.500-3.500 5.500" stroke="#fff" stroke-width="1.500"/>`)}<span>找稻壳模板</span></button>
      <button class="doc c">${icon(16, 17, svg`<rect y=".5" width="16" height="16" rx="1.500" fill="#12a06a" stroke="none"/><path d="M0 14h16v1a1.500 1.500 0 0 1-1.500 1.500h-13A1.500 1.500 0 0 1 0 15z" fill="#0a7a50" stroke="none"/><path d="M11 4.500C9 2.800 5.300 3.300 5.500 5.300s5.300 1.200 5.300 3.400-4 2.300-5.800.8" stroke="#fff" stroke-width="1.700"/>`)}<span class="grow">医护版EXCEL.xlsx</span>${icon(12, 12, svg`<path d="M.5 1.500h11v7H.5zM6 8.500V11M3 11.500h6" stroke="#888"/>`)}<i class="dot"></i></button>
      <button class="plus" aria-label="新建">${icon(14, 14, svg`<path d="M7 .5v13M.5 7h13" stroke-width="1.400"/>`)}</button><button aria-label="新建选项">${caret}</button>
      <span class="grow"></span>
      <div class="win"><span class="sep"></span><span class="in4"></span>
        <button class="slim" aria-label="窗口">${icon(14, 14, svg`<path d="M.5 2.500h10v11H.5zM3 .5h9.500V11"/>`)}</button>
        <button class="slim" aria-label="应用">${icon(15, 16, svg`<path d="m7.500.7 6.500 3.500v7.600l-6.500 3.500L1 11.800V4.200zM4 5.500l3.500 2 3.500-2M7.500 7.500v5"/>`)}</button>
        <a class="login" href="#login">${icon(17, 16, svg`<circle cx="8.500" cy="8" r="8" fill="#2456dd" stroke="none"/><circle cx="8.500" cy="6" r="2.600" fill="#fff" stroke="none"/><path d="M4 12.500c0-5 9-5 9 0z" fill="#fff" stroke="none"/>`)}立即登录</a>
        <button aria-label="最小化">${icon(10, 10, svg`<path d="M0 4.500h10"/>`)}</button>
        <button aria-label="还原">${icon(13, 13, svg`<path d="M.5 4.500h8v8h-8zM4.500 4V.5h8v8H9"/>`)}</button>
        <button aria-label="关闭">${icon(11, 11, svg`<path d="m.5.5 10 10M10.500.5l-10 10" stroke-width="1.100"/>`)}</button>
      </div></header>`;
  }

  private menubar() {
    const tools: [string, unknown][] = [["保存", I.save], ["输出", I.link], ["打印", I.print], ["打印预览", I.preview], ["撤销", I.undo], ["恢复", I.redo], ["更多", I.more]];
    return html`<nav class="menubar">
      <button class="file">${I.menu}<span>文件</span>${caret}</button><span class="sep"></span><span class="in6"></span>
      ${tools.map(([l, i]) => html`<button class="tool" aria-label=${l}>${i}</button>`)}
      <span class="in6"></span><span class="sep"></span>
      <div class="tabs">${MENUS.map((m, i) => html`<button class=${i ? "" : "on"}>${m}</button>`)}</div>
      <span class="sep"></span><button class="ai">${I.ai}<span>WPS AI</span></button><button aria-label="搜索">${I.search}</button>
      <span class="grow"></span><button aria-label="云同步">${I.cloud}</button><button class="share">${I.share}<span>分享</span></button>
    </nav>`;
  }

  private ribbon() {
    return html`<section class="ribbon">
      <div class="group g1">${this.big(I.brush, "格式刷", false, "w48")}${this.big(I.paste, "粘贴", true, "w48")}
        <div class="stack in2"><button class="dd" aria-label="剪切"><i>${I.cut}</i></button>${this.dd(I.copy, "复制")}</div>${this.launch("剪贴板")}</div>
      <div class="group g2"><div class="stack">
        <div class="line in2"><label class="pick font"><select aria-label="字体"><option>宋体</option></select>${chevron}</label>
          <label class="pick size"><select aria-label="字号"><option>11</option></select>${chevron}</label>${this.sm(I.aup, "增大字号")}${this.sm(I.adown, "减小字号")}</div>
        <div class="line">${this.sm(I.bold, "加粗")}${this.sm(I.italic, "倾斜")}${this.sm(I.underline, "下划线")}${this.sm(I.strike, "删除线")}
          ${this.dd(I.borders, "边框", "in6")}${this.dd(I.fill, "填充颜色")}${this.dd(I.color, "字体颜色")}${this.dd(I.eraser, "清除")}</div></div>${this.launch("字体设置")}</div>
      <div class="group g3"><div class="stack">
        <div class="line">${this.sm(I.vtop, "顶端对齐")}${this.sm(I.vmid, "垂直居中", "on")}${this.sm(I.vbot, "底端对齐")}${this.sm(I.outd, "减少缩进")}${this.sm(I.ind, "增加缩进")}</div>
        <div class="line">${this.sm(I.left, "左对齐")}${this.sm(I.center, "居中")}${this.sm(I.right, "右对齐")}${this.sm(I.just, "两端对齐")}${this.sm(I.dist, "分散对齐")}</div></div>
        ${this.big(I.wrap, "换行", false, "w48")}${this.big(I.merge, "合并", true, "w40")}${this.launch("对齐设置")}</div>
      <div class="group g4"><div class="stack">
        <div class="line"><label class="pick"><select aria-label="数字格式"><option>常规</option></select>${chevron}</label>${this.wide(I.convert, "转换", "in8")}</div>
        <div class="line">${this.dd(I.yen, "货币", "in2")}${this.sm(I.percent, "百分比")}${this.sm(I.thousand, "千位分隔")}${this.sm(I.incdec, "增加小数位")}${this.sm(I.decdec, "减少小数位")}</div></div>${this.launch("数字设置")}</div>
      <div class="group g5"><div class="stack">${this.wide(I.rowcol, "行和列")}${this.wide(I.sheet, "工作表")}</div></div>
      <div class="group g6">${this.big(I.cond, "条件格式", true, "w62")}<div class="stack in10">${this.wide(I.tstyle, "表格样式")}${this.wide(I.cstyle, "单元格样式")}</div></div>
      <div class="group last">${this.big(I.fillc, "填充")}${this.big(I.sum, "求和")}${this.big(I.sort, "排序")}${this.big(I.filter, "筛选")}${this.big(I.freeze, "冻结")}${this.big(I.find, "查找")}</div>
    </section>`;
  }

  private side() {
    const b = (l: string, i: unknown, off = false) => html`<button class=${off ? "off" : ""} aria-label=${l}>${i}</button>`;
    return html`<aside class="side"><button class="dash" aria-label="收起"><i></i></button>
      ${b("选择", icon(17, 17, svg`<path d="m1 1 14 5.500-5.500 3 5.500 4.500-1.500 2-5-5L5 15z" stroke-width="1.200"/>`))}
      ${b("属性", icon(16, 16, svg`<path d="M0 4.500h2.500M6.500 4.500H16M0 11.500h9.500M13.500 11.500H16"/><rect x="2.500" y="1.500" width="4" height="5.500" rx="2"/><rect x="9.500" y="8.500" width="4" height="5.500" rx="2"/>`), true)}
      ${b("分析", icon(16, 16, svg`<path d="M3 .5h13M.5 3v13M0 .5h1.500M13.500 13.500V4M11 6l2.500-2.500L16 6M13.500 13.500H4M6 11l-2.500 2.500L6 16"/>`), true)}
      ${b("素材", icon(17, 16, svg`<path d="M15.500 4.500 13.500 1H3.500L1 4.500C1 7 4 7.500 5.500 5M1.500 7v7.500H5M8 14.500c-1.500-2-1-5 .5-7 1 2 .8 5-.5 7zM11.500 13.500c-1-3-.5-6 1.500-8.500.800 3 0 6-1.500 8.500zM11 15c1-3 2.500-4.500 5-5-.5 3-2 4.800-5 5z" stroke-width="1.200"/>`))}
      ${b("工具箱", icon(16, 16, svg`<path d="M3 2.500 4.500 1c3.500 2 9 8 10.500 11.500L13 14.500C9.500 12 4 6.500 3 2.500zM7 5.500l1.500-1.500" stroke-width="1.200"/><path d="m13 .8 2.200 2.200L13 5.200 10.800 3zM2.800 9 5 11.200l-2.200 2.200-2.200-2.200z" stroke-width="1.300"/>`))}
      ${b("查询", icon(17, 16, svg`<path d="M7 15.500 1 14V1l7 2 7-2v7.500M8 3v4" stroke-width="1.200"/><circle cx="11" cy="11" r="3.500"/><path d="m13.500 13.500 2.500 2.500"/>`))}
      ${b("帮助", icon(17, 17, svg`<circle cx="8.500" cy="8.500" r="7.700" stroke-width="1.200"/><path d="M6.200 6.800c0-3.300 4.700-3 4.700-.3 0 2-2.400 2-2.400 4M8.500 12v1.500" stroke-width="1.200"/>`))}
      ${b("更多", icon(16, 6, svg`<circle cx="2" cy="3" r="1.400" stroke-width="1.200"/><circle cx="8" cy="3" r="1.400" stroke-width="1.200"/><circle cx="14" cy="3" r="1.400" stroke-width="1.200"/>`))}
    </aside>`;
  }

  private sheets() {
    const n = (l: string, d: string, c = "") => html`<button class="nav ${c}" aria-label=${l}>${icon(10, 11, svg`<path d=${d} stroke-width="1.600"/>`)}</button>`;
    return html`<div class="sheets">
      ${n("第一个", "M1 .5v10M8.500 1 4 5.500 8.500 10", "first")}${n("上一个", "M7 1 2.500 5.500 7 10")}${n("下一个", "M3 1l4.500 4.500L3 10")}${n("最后一个", "M9 .5v10M1.500 1 6 5.500 1.500 10", "end")}
      ${SHEETS.map((s) => html`<button class="st ${s === "小工具" ? "on" : ""}">${s}</button>`)}
      <button class="add" aria-label="新建工作表">${icon(11, 11, svg`<path d="M5.500.5v10M.5 5.500h10" stroke="#222" stroke-width="1.800"/>`)}</button>
      <span class="grow"></span>
      <div class="hbar"><i class="tickv"></i>${icon(6, 6, svg`<path d="M5 0v6L0 3z" fill="#777" stroke="none"/>`)}<div class="htrack"><div class="hthumb"></div></div>${icon(6, 6, svg`<path d="M0 0v6l5-3z" fill="#777" stroke="none"/>`)}<i class="tickv"></i></div>
    </div>`;
  }

  private status() {
    return html`<footer class="status">
      <button aria-label="宏">${icon(16, 14, svg`<path d="M2.500 0v4H.5M7 .5H5v2h2V4.500H4.500M8 .5h4M9.500.5V5M12.500 5V.5h2v3h-2M4 7.500h5v3H4zM2.500 12.500v-2H1M10.500 6v6.500h-8M10.500 12.500h2V4"/>`)}</button>
      <span class="sep in12"></span><span class="in14"></span>${icon(14, 13, svg`<path d="M12.500 3V.5H.5V12H4M7 5.500h5M8 8.500h5M7 12h6"/>`)}
      <span class="in14">&nbsp;89</span><span class="grow"></span>
      <button class="vw" aria-label="护眼">${icon(15, 13, svg`<path d="M.7 6.500C2 3.500 4 1 7.500 1s5.500 2.500 6.800 5.500C13 9.500 11 12 7.500 12S2 9.500.7 6.500z"/><circle cx="7.500" cy="6.500" r="2.300"/>`)}</button>
      <button class="dd in8" aria-label="阅读"><i>${icon(14, 14, svg`<path d="M5 5V1h4v4h4v4H9v4H5V9H1V5zM5 5h4v4H5z"/>`)}</i>${caret}</button>
      <span class="sep in4"></span><span class="in4"></span>
      <button class="vw on" aria-label="普通视图"><i>${icon(14, 12, svg`<path d="M.5.5h13v11H.5zM.5 3.500h13M.5 7.500h13M5 .5v11"/>`)}</i></button>
      <button class="vw" aria-label="分页预览">${icon(14, 12, svg`<path d="M.5.5h13v11H.5zM7 .5v11"/>`)}</button>
      <button class="vw" aria-label="页面布局">${icon(14, 12, svg`<path d="M.5.5h9v7h-9zM12.500 0v10.500H0M0 8v3"/>`)}</button>
      <span class="sep in4"></span><button class="zoomv"><span>100%</span>${caret}</button>
      <button class="full" aria-label="全屏">${icon(12, 12, svg`<path d="M7 .5h4.500V5M11.500.5 7 5M.5 7v4.500H5M9 11.500h2.500V9"/>`)}</button>
    </footer>`;
  }

  private task() {
    return html`<footer class="task">
      <button aria-label="开始">${icon(23, 23, svg`<defs><linearGradient id="wn" x1="0" y1="0" x2="1" y2="1"><stop stop-color="#4cc8fa"/><stop offset="1" stop-color="#0468d0"/></linearGradient></defs><path d="M0 0h11v11H0zM12 0h11v11H12zM0 12h11v11H0zM12 12h11v11H12z" fill="url(#wn)" stroke="none"/>`)}</button>
      <label class="searchbox">${icon(16, 16, svg`<circle cx="7" cy="7" r="5.500" stroke-width="1.700"/><path d="m11 11 4 4" stroke-width="1.700"/>`)}<input aria-label="搜索" placeholder="搜索" />
        ${icon(50, 24, svg`<g stroke="none"><path d="m1 12 3 1 1-4 3 3 3-1-1 5 2 2-4 2-1 4-2-4-4-1 1-3z" fill="#b3a021"/><path d="m42 3 3 1 2-3 1 5-1 6-3-2z" fill="#f5a13a"/><ellipse cx="19" cy="14.500" rx="7.500" ry="8.500" fill="#e2634a"/><ellipse cx="19" cy="14.500" rx="3.200" ry="8.500" fill="#ee8263"/><path d="M17 6c0-2 1-4 3-5l1 1-1 4z" fill="#56883a"/><ellipse cx="34.500" cy="16.500" rx="9" ry="7" fill="#d9402c"/><ellipse cx="34.500" cy="16.500" rx="4" ry="7" fill="#ea6345"/><path d="M33 10c-1-2-2-3-3-4l2-1 3 5z" fill="#56883a"/><path d="m14 11 3 2-3 1zm10 0-3 2 3 1zM14 16c3 1.500 7 1.500 10 0 0 4-9 5-10 0zM30 13l3 2-3 1zm9 0-3 2 3 1zM29 17.500c3 1.500 8 1.500 11 0 0 4-10 4.500-11 0z" fill="#5b2346"/></g>`)}</label>
      <button class="app run" aria-label="浏览器">${icon(24, 24, svg`<defs><linearGradient id="e1" x1="0" y1="0" x2="1" y2=".4"><stop stop-color="#2098d8"/><stop offset=".6" stop-color="#2cc3c0"/><stop offset="1" stop-color="#62dc5e"/></linearGradient><linearGradient id="e2" x1="0" y1="0" x2="1" y2="1"><stop stop-color="#1b8fe0"/><stop offset="1" stop-color="#0c4a98"/></linearGradient></defs><g stroke="none"><path d="M0 11.500C.5 5 5.500 0 12 0s12 4.500 12 10.500c0 4-3 6-6 6-3.500 0-5-1.500-4.500-2.500 2-2.500.5-6.500-4.500-6.500C4.500 7.500 1 9 0 11.500z" fill="url(#e1)"/><path d="M0 11.500C1 9 4.500 7 8.500 7.500c-4.500 3-2.500 12 5.500 12 3 0 6-.5 8.500-2.500C20.500 21.500 16.500 24 12 24 5 24-.5 18.500 0 11.500z" fill="url(#e2)"/><path d="M9.500 9.500c-4 3-1.500 10 5 10 3.500 0 6-1 8-2.500-4 6-15 8-18-1-.8-3 1.500-6 5-6.500z" fill="#0f4f9c"/></g>`)}</button>
      <button class="app" aria-label="搜索工具">${icon(24, 24, svg`<circle cx="10.500" cy="10" r="8.500" stroke="#2468f2" stroke-width="3"/><path d="M5.500 10a5 5 0 0 1 5-5" stroke="#7cc0f8" stroke-width="1.600"/><path d="m17 16.500 5 5.500" stroke="#1c50e8" stroke-width="3.500"/>`)}</button>
      <button class="app run" aria-label="文件资源管理器">${icon(24, 24, svg`<g stroke="none"><path d="M0 2.500C0 1.500.5 1 1.500 1H9l3 3H0z" fill="#dc9a08"/><path d="M0 5h9l2-2.500h12a1 1 0 0 1 1 1V21a1.500 1.500 0 0 1-1.500 1.500h-21A1.500 1.500 0 0 1 0 21z" fill="#fcc838"/><path d="M4 22.500V18a2.500 2.500 0 0 1 2.500-2.500h11A2.500 2.500 0 0 1 20 18v4.500z" fill="#1573c8"/><path d="M8 19h8" stroke="#0e569c" stroke-width="2"/></g>`)}</button>
      <button class="app on" aria-label="WPS">${icon(24, 17, svg`<path d="M0 0h7l3 8.500L13 1h4L9 16.500H7z" fill="#f2301c" stroke="none"/><path d="M9.500 12 13 3.500 15.500 10 18.500 2.500M18.500 1.500H22l-6 14-2.500-6" stroke="#f2301c" stroke-width="2.800"/><path d="M4.500 2.500 8 12" stroke="#fff0e0" stroke-width="1.200"/>`)}</button>
      <span class="grow"></span>
      <div class="tray">
        <button class="t24" aria-label="显示隐藏图标">${icon(11, 7, svg`<path d="m.8 6 4.700-4.700L10.200 6" stroke-width="1.400"/>`)}</button>
        ${SOGOU(16)}
        <button class="t20" aria-label="网络">${icon(18, 17, svg`<path d="M12 1.500H2.500a1 1 0 0 0-1 1v9a1 1 0 0 0 1 1h11V9M6 12.500v3.500M10 12.500v3.500M4 16h9M12.500 1h4v4.500h-4zM14.500 5.500V16" stroke-width="1.200"/>`)}</button>
        <button aria-label="音量">${icon(16, 16, svg`<path d="M6.500 3v-1L3.500 5h-2a1 1 0 0 0-1 1v3.500h3" stroke-width="1.200"/><circle cx="10.500" cy="10.500" r="4.700" fill="#222" stroke="none"/><path d="m8.500 8.500 4 4M12.500 8.500l-4 4" stroke="#fff"/>`)}</button>
        <time class="clock">20:26<br />2024/10/31</time>
        <button aria-label="通知">${icon(16, 16, svg`<path d="M6 2.500C4 3.500 3 5 3 7v3l-1.500 2.500h12L12.500 10M6 13c0 2 3 2 3 0M6.500 5.500h4L6.500 10h4M12 1h3l-3 3.500h3" stroke-width="1.200"/>`)}</button>
      </div></footer>`;
  }

  private overlays() {
    return html`<div class="mark">@濠滨</div>
      <div class="float"><i class="led"></i><hr /><i class="temp"></i><hr class="n" />
        <span class="rate"><span>0.0</span><small>${icon(6, 11, svg`<path d="M3 10V3M.8 5.500 3 3l2.200 2.500" stroke="#18a0f0" stroke-width="1.600"/>`)}K/s</small></span>
        <span class="rate"><span>1.7</span><small>${icon(6, 11, svg`<path d="M3 2v7M.8 6.500 3 9l2.200-2.500" stroke="#0bb060" stroke-width="1.600"/>`)}K/s</small></span>
        <hr class="m" />${icon(16, 14, svg`<path d="M1 3.500h3L5.500 1.500h5L12 3.500h3v10H1z" stroke="#e0e0e0"/><circle cx="8" cy="8" r="2" fill="#fff" stroke="none"/>`)}</div>
      <div class="ime">${SOGOU(32)}<div class="bg">
        ${icon(16, 16, svg`<path d="M2 4.500h12v6H2zM8 1v14" stroke-width="2"/>`)}
        ${icon(13, 12, svg`<circle cx="3.500" cy="3.500" r="2" stroke-width="1.400"/><path d="M10.500 5.500v2c0 1.500-.5 2.500-1.500 3.500" stroke-width="2.400"/>`)}
        ${icon(12, 16, svg`<rect x="3" y="0" width="6" height="10" rx="3" fill="currentColor" stroke="none"/><path d="M1 7c0 6 10 6 10 0M6 11.500V15M3.500 15h5" stroke-width="1.500"/>`)}
        ${icon(16, 14, svg`<rect x="1" y="1.500" width="14" height="11" rx="1.500" stroke-width="1.600"/><path d="M3.500 4.500h9M3.500 7h9" stroke-width="1.400" stroke-dasharray="1.600 1"/><path d="M5 10h6" stroke-width="1.400"/>`)}
        ${icon(16, 16, svg`<path d="M5 1c1 1.800 5 1.800 6 0l4.500 2v4.500H13V15H3V7.500H.5V3z" fill="currentColor" stroke="none"/>`)}
        ${icon(14, 14, svg`<g fill="currentColor" stroke="none"><rect width="6" height="6" rx="1.500"/><rect y="8" width="6" height="6" rx="1.500"/><rect x="8" y="8" width="6" height="6" rx="1.500"/></g><circle cx="11" cy="3" r="2.200" stroke-width="1.600"/>`)}
        ${icon(16, 16, svg`<path d="M3 4C3 1 5 .5 6 2h4c1-1.500 3-1 3 2 3 4 2 11-5 11S0 8 3 4z" stroke="#b58be8" stroke-width="1.200" fill="#fdeef4"/><path d="M3 6h10v3.500L11 12H5L3 9.500z" fill="#f5780c" stroke="none"/><circle cx="8" cy="9" r="2" fill="#5a3a28" stroke="none"/>`)}
      </div></div>`;
  }

  render() {
    return html`${this.title()}${this.menubar()}${this.ribbon()}
      <div class="body"><main class="main">
        <div class="fbar"><label class="name"><input aria-label="名称框" value="C3" />${chevron}</label>
          <div class="formula">${I.zoomout}<span class="fx">fx</span><span class="sep"></span><input aria-label="编辑栏" value='=DATEDIF(A3,B3,"d")' /></div></div>
        <div class="sheet"><sheet-grid></sheet-grid>
          <div class="vbar"><i class="tick"></i><i class="up"></i><div class="vtrack"><div class="vthumb"></div></div><i class="down"></i></div></div>
        ${this.sheets()}</main>${this.side()}</div>
      ${this.status()}${this.task()}${this.overlays()}`;
  }
}
